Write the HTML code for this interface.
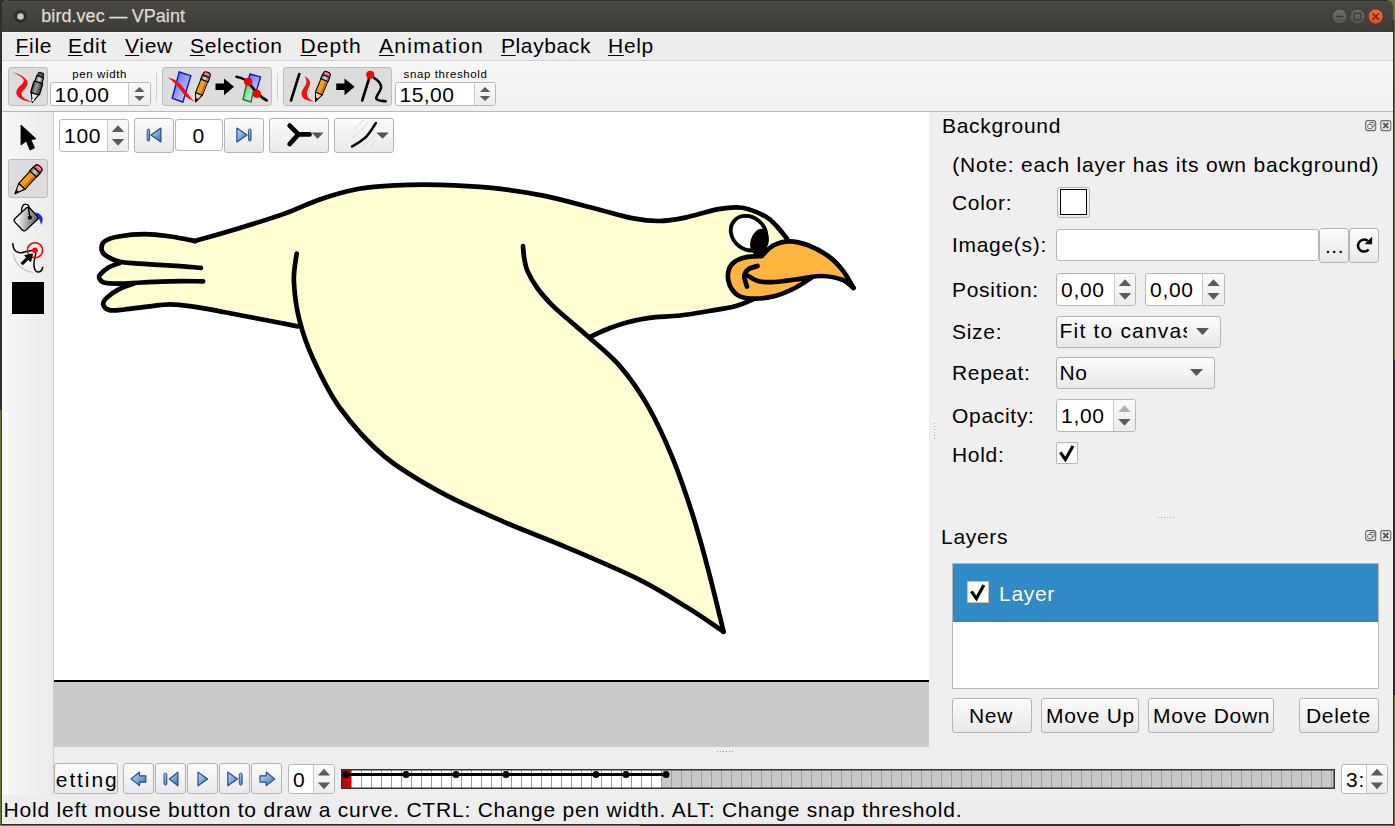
<!DOCTYPE html><html><head><meta charset="utf-8"><style>
*{margin:0;padding:0;box-sizing:border-box}
html,body{width:1395px;height:826px;overflow:hidden;background:#63763a}
u{text-decoration-thickness:1px;text-underline-offset:2px}
.t{position:absolute;font-family:"Liberation Sans",sans-serif;white-space:nowrap}
.b{position:absolute}
.btn{position:absolute;border:1px solid #b4b4b4;border-radius:3px;background:linear-gradient(#fbfbfb,#e9e9e9)}
.tbtn{position:absolute;border:1px solid #bdbdbd;border-radius:3px;background:#dcdcdc}
.spin{position:absolute;border:1px solid #b8b8b8;border-radius:3px;background:#fff}
.spinr{position:absolute;top:0;border-left:1px solid #c8c8c8;background:linear-gradient(#fafafa,#ececec);border-radius:0 2px 2px 0}
.field{position:absolute;border:1px solid #b8b8b8;border-radius:3px;background:#fff}
</style></head><body><div class="b" style="left:0px;top:0px;width:2px;height:410px;background:#2f2f2f"></div><div class="b" style="left:0px;top:0px;width:12px;height:12px;background:#2f2f2f"></div><div class="b" style="left:1393px;top:360px;width:2px;height:335px;background:#2a2a2a"></div><div class="b" style="left:1393px;top:20px;width:1px;height:804px;background:#2e2e2e"></div><div class="b" style="left:1px;top:410px;width:1px;height:414px;background:#3a3f30"></div><div class="b" style="left:1px;top:824px;width:1393px;height:1px;background:#2e2e2e"></div><div class="b" style="left:640px;top:824px;width:600px;height:2px;background:#2f2f2f"></div><div class="b" style="left:2px;top:0px;width:1391px;height:824px;background:#ededed;border-radius:6px 6px 0 0"></div><div class="b" style="left:2px;top:0px;width:1391px;height:32px;background:linear-gradient(#4a4944,#3c3b37);border-radius:6px 6px 0 0;border-top:1px solid #2e2d2a"></div><svg class="b" style="left:0;top:0" width="60" height="32"><circle cx="20.5" cy="16.5" r="6.5" fill="#2f2e2b"/><circle cx="20.5" cy="16.5" r="3.3" fill="#c9c6c0"/></svg><div class="t" style="left:41.3px;top:7.06px;font-size:18px;line-height:18px;letter-spacing:0.05px;color:#dfdbd2;-webkit-text-stroke:0.25px #dfdbd2;word-spacing:-0.6px">bird.vec — VPaint</div><svg class="b" style="left:1325px;top:4px" width="66" height="26">
<defs><linearGradient id="gb" x1="0" y1="0" x2="0" y2="1"><stop offset="0" stop-color="#6e6d68"/><stop offset="1" stop-color="#54534f"/></linearGradient>
<linearGradient id="gr" x1="0" y1="0" x2="0" y2="1"><stop offset="0" stop-color="#f06a3c"/><stop offset="1" stop-color="#df4f1c"/></linearGradient></defs>
<circle cx="14.5" cy="12.5" r="7.6" fill="url(#gb)" stroke="#33322f" stroke-width="0.8"/>
<line x1="11" y1="12.5" x2="18" y2="12.5" stroke="#3a3935" stroke-width="1.3"/>
<circle cx="32.5" cy="12.5" r="7.6" fill="url(#gb)" stroke="#33322f" stroke-width="0.8"/>
<rect x="29.2" y="9.2" width="6.6" height="6.6" fill="none" stroke="#3a3935" stroke-width="1.3"/>
<circle cx="50.7" cy="12.5" r="7.6" fill="url(#gr)" stroke="#33322f" stroke-width="0.8"/>
<path d="M47.6,9.4 L53.8,15.6 M53.8,9.4 L47.6,15.6" stroke="#3a2a20" stroke-width="1.3"/>
</svg><div class="b" style="left:2px;top:32px;width:1391px;height:28px;background:#ededed"></div><div class="b" style="left:2px;top:32px;width:1391px;height:1px;background:#f8f8f8"></div><div class="b" style="left:2px;top:60px;width:1391px;height:1px;background:#d4d4d4"></div><div class="t" style="left:15.5px;top:35.22px;font-size:21px;line-height:21px;letter-spacing:0.7px;color:#000;"><u>F</u>ile</div><div class="t" style="left:68px;top:35.22px;font-size:21px;line-height:21px;letter-spacing:0.7px;color:#000;"><u>E</u>dit</div><div class="t" style="left:125px;top:35.22px;font-size:21px;line-height:21px;letter-spacing:0.7px;color:#000;"><u>V</u>iew</div><div class="t" style="left:190px;top:35.22px;font-size:21px;line-height:21px;letter-spacing:0.7px;color:#000;"><u>S</u>election</div><div class="t" style="left:300.5px;top:35.22px;font-size:21px;line-height:21px;letter-spacing:1.05px;color:#000;"><u>D</u>epth</div><div class="t" style="left:379px;top:35.22px;font-size:21px;line-height:21px;letter-spacing:1.3px;color:#000;"><u>A</u>nimation</div><div class="t" style="left:501px;top:35.22px;font-size:21px;line-height:21px;letter-spacing:0.6px;color:#000;"><u>P</u>layback</div><div class="t" style="left:608px;top:35.22px;font-size:21px;line-height:21px;letter-spacing:0.7px;color:#000;"><u>H</u>elp</div><div class="b" style="left:2px;top:61px;width:1391px;height:50px;background:linear-gradient(#f7f7f7,#f1f1f1)"></div><div class="b" style="left:2px;top:111px;width:1391px;height:1px;background:#b9b9b9"></div><div class="tbtn" style="left:8px;top:67px;width:40px;height:39px"></div><div class="tbtn" style="left:162px;top:67px;width:110px;height:39px"></div><div class="tbtn" style="left:283px;top:67px;width:109px;height:39px"></div><div class="b" style="left:156px;top:73px;width:1px;height:28px;background:#d0d0d0"></div><div class="b" style="left:277px;top:73px;width:1px;height:28px;background:#d0d0d0"></div><div class="t" style="left:72.3px;top:69.07px;font-size:11.5px;line-height:11.5px;letter-spacing:0.6px;color:#000;">pen width</div><div class="spin" style="left:50px;top:82px;width:101px;height:24px"><div class="spinr" style="left:77px;width:22px;height:22px"></div><svg style="position:absolute;left:77px;top:-1px" width="23" height="24"><path d="M6.3,10.1 L11.5,5.0 L16.7,10.1 Z" fill="#5c5c5c"/><path d="M6.3,13.9 L11.5,19.0 L16.7,13.9 Z" fill="#5c5c5c"/></svg></div><div class="t" style="left:54.5px;top:84.22px;font-size:21px;line-height:21px;letter-spacing:0.45px;color:#000;">10,00</div><div class="t" style="left:403.6px;top:69.07px;font-size:11.5px;line-height:11.5px;letter-spacing:0.6px;color:#000;">snap threshold</div><div class="spin" style="left:395px;top:82px;width:101px;height:24px"><div class="spinr" style="left:78px;width:21px;height:22px"></div><svg style="position:absolute;left:78px;top:-1px" width="22" height="24"><path d="M5.8,10.1 L11.0,5.0 L16.2,10.1 Z" fill="#5c5c5c"/><path d="M5.8,13.9 L11.0,19.0 L16.2,13.9 Z" fill="#5c5c5c"/></svg></div><div class="t" style="left:399.5px;top:84.22px;font-size:21px;line-height:21px;letter-spacing:0.45px;color:#000;">15,00</div><div class="b" style="left:2px;top:112px;width:51px;height:683px;background:linear-gradient(90deg,#f8f8f8,#ebebeb)"></div><div class="b" style="left:53px;top:112px;width:1px;height:683px;background:#cdcdcd"></div><div class="tbtn" style="left:8px;top:159px;width:40px;height:39px"></div><div class="b" style="left:12px;top:282px;width:32px;height:32px;background:#000"></div><div class="b" style="left:54px;top:112px;width:875px;height:568px;background:#fff"></div><div class="b" style="left:54px;top:680px;width:875px;height:2px;background:#000"></div><div class="b" style="left:54px;top:682px;width:875px;height:65px;background:#cbcbcb"></div><div class="spin" style="left:59px;top:119px;width:70px;height:33px"><div class="spinr" style="left:47px;width:21px;height:31px"></div><svg style="position:absolute;left:47px;top:-1px" width="22" height="33"><path d="M4.8,12.9 L11.0,6.300000000000001 L17.2,12.9 Z" fill="#5c5c5c"/><path d="M4.8,20.1 L11.0,26.7 L17.2,20.1 Z" fill="#5c5c5c"/></svg></div><div class="t" style="left:64px;top:125.22px;font-size:21px;line-height:21px;letter-spacing:0.7px;color:#000;">100</div><div class="btn" style="left:134px;top:118px;width:40px;height:35px"></div><div class="field" style="left:175px;top:119px;width:48px;height:32px"></div><div class="t" style="left:192.5px;top:125.22px;font-size:21px;line-height:21px;letter-spacing:0.7px;color:#000;">0</div><div class="btn" style="left:224px;top:118px;width:40px;height:35px"></div><div class="btn" style="left:269px;top:118px;width:60px;height:35px"></div><div class="btn" style="left:334px;top:118px;width:60px;height:35px"></div><svg class="bird" width="1395" height="826" viewBox="0 0 1395 826" style="position:absolute;left:0;top:0" fill="none" stroke="#000" stroke-width="4.7" stroke-linecap="round" stroke-linejoin="round"><path d="M195.0,241.0 C206.0,239.8 221.9,233.5 236.6,229.0 C251.3,224.5 269.2,219.1 283.2,214.1 C297.2,209.1 308.1,203.4 320.5,199.2 C332.9,195.0 345.4,191.3 357.8,189.0 C370.2,186.7 381.3,186.0 395.0,185.3 C408.7,184.6 423.9,184.4 440.0,184.8 C456.1,185.2 474.4,186.1 491.6,187.9 C508.8,189.7 526.0,192.2 543.2,195.6 C560.4,199.0 579.8,204.7 594.8,208.5 C609.8,212.3 622.7,216.3 633.5,218.4 C644.3,220.5 650.8,221.1 659.4,221.0 C668.0,220.9 675.3,219.6 685.2,217.6 C695.1,215.6 709.2,210.7 718.7,209.1 C728.2,207.5 734.1,206.6 741.9,207.8 C749.6,209.0 759.4,213.2 765.2,216.3 C771.1,219.4 773.4,222.8 777.0,226.5 C780.6,230.2 784.7,235.5 786.9,238.6 C789.1,241.7 785.3,241.1 790.0,245.0 C794.7,248.9 813.3,255.8 815.0,262.0 C816.7,268.2 807.5,276.5 800.0,282.0 C792.5,287.5 780.7,291.0 770.0,295.0 C759.3,299.0 746.6,303.2 736.0,306.0 C725.4,308.8 715.8,309.9 706.5,311.5 C697.2,313.1 689.5,314.4 680.0,315.5 C670.5,316.6 657.9,316.7 649.4,317.8 C640.9,318.9 635.3,320.3 628.7,322.0 C622.1,323.7 616.5,325.5 610.0,328.0 C603.5,330.5 587.9,330.7 589.5,337.0 C591.1,343.3 609.9,354.3 619.5,365.6 C629.1,376.9 638.4,389.6 647.1,404.7 C655.8,419.8 664.3,438.0 671.7,455.9 C679.1,473.8 685.7,493.2 691.7,511.8 C697.7,530.5 702.4,547.8 707.7,567.8 C713.0,587.8 726.9,625.0 723.6,631.7 C720.3,638.4 701.7,616.4 687.7,607.8 C673.7,599.1 659.7,589.8 639.7,579.8 C619.7,569.8 590.4,557.5 567.8,547.8 C545.1,538.1 525.1,531.1 503.8,521.8 C482.5,512.5 459.9,502.9 439.9,491.9 C419.9,480.9 400.5,469.9 383.9,455.9 C367.2,441.9 351.8,424.1 340.0,408.0 C328.2,391.9 320.4,373.0 313.4,359.4 C306.4,345.8 306.7,333.1 297.8,326.4 C288.9,319.7 272.4,321.4 260.0,319.0 C247.7,316.6 234.8,314.1 223.7,312.0 C212.6,309.9 202.3,307.9 193.4,306.6 C184.5,305.3 178.2,304.3 170.5,304.3 C162.8,304.3 155.2,305.7 147.5,306.6 C139.8,307.5 130.8,308.9 124.5,309.5 C118.2,310.1 113.0,311.0 109.5,310.1 C106.0,309.2 103.6,306.4 103.2,304.3 C102.8,302.2 104.6,299.9 107.2,297.4 C109.8,294.9 114.3,291.7 118.7,289.4 C123.1,287.1 133.7,284.6 133.7,283.6 C133.7,282.6 123.7,283.8 118.7,283.6 C113.7,283.4 107.0,283.4 103.8,282.5 C100.5,281.6 99.8,279.2 99.2,277.9 C98.6,276.5 98.8,276.1 100.3,274.4 C101.8,272.7 105.1,269.4 108.4,267.5 C111.7,265.6 120.5,265.0 119.9,262.9 C119.3,260.8 108.0,257.4 104.9,254.9 C101.8,252.4 101.5,250.3 101.5,248.0 C101.5,245.7 102.0,243.0 104.9,241.1 C107.8,239.2 112.0,237.7 118.7,236.5 C125.4,235.3 136.6,234.2 145.2,234.2 C153.8,234.2 162.2,235.4 170.5,236.5 C178.8,237.6 184.0,242.2 195.0,241.0 Z" fill="#fffdd2" stroke="none"/><path d="M195.0,241.0 C201.9,239.0 221.9,233.5 236.6,229.0 C251.3,224.5 269.2,219.1 283.2,214.1 C297.2,209.1 308.1,203.4 320.5,199.2 C332.9,195.0 345.4,191.3 357.8,189.0 C370.2,186.7 381.3,186.0 395.0,185.3 C408.7,184.6 423.9,184.4 440.0,184.8 C456.1,185.2 474.4,186.1 491.6,187.9 C508.8,189.7 526.0,192.2 543.2,195.6 C560.4,199.0 579.8,204.7 594.8,208.5 C609.8,212.3 622.7,216.3 633.5,218.4 C644.3,220.5 650.8,221.1 659.4,221.0 C668.0,220.9 675.3,219.6 685.2,217.6 C695.1,215.6 709.2,210.7 718.7,209.1 C728.2,207.5 734.1,206.6 741.9,207.8 C749.6,209.0 759.4,213.2 765.2,216.3 C771.1,219.4 773.4,222.8 777.0,226.5 C780.6,230.2 785.2,236.6 786.9,238.6"/><path d="M195.0,241.0 C190.9,240.2 178.8,237.6 170.5,236.5 C162.2,235.4 153.8,234.2 145.2,234.2 C136.6,234.2 125.4,235.3 118.7,236.5 C112.0,237.7 107.8,239.2 104.9,241.1 C102.0,243.0 101.5,245.7 101.5,248.0 C101.5,250.3 101.8,252.6 104.9,254.9 C108.0,257.2 112.8,260.3 119.9,261.8 C127.0,263.3 138.1,263.4 147.5,264.1 C156.9,264.8 167.3,265.2 176.2,265.8 C185.1,266.4 196.8,267.5 200.9,267.8"/><path d="M119.9,262.9 C118.0,263.7 111.7,265.6 108.4,267.5 C105.1,269.4 101.8,272.7 100.3,274.4 C98.8,276.1 98.6,276.5 99.2,277.9 C99.8,279.2 100.5,281.6 103.8,282.5 C107.0,283.4 112.4,283.6 118.7,283.6 C125.0,283.6 133.1,282.9 141.7,282.5 C150.3,282.1 160.2,281.5 170.5,281.3 C180.8,281.1 197.8,281.3 203.2,281.3"/><path d="M133.7,283.6 C131.2,284.6 123.1,287.1 118.7,289.4 C114.3,291.7 109.8,294.9 107.2,297.4 C104.6,299.9 102.8,302.2 103.2,304.3 C103.6,306.4 106.0,309.2 109.5,310.1 C113.0,311.0 118.2,310.1 124.5,309.5 C130.8,308.9 139.8,307.5 147.5,306.6 C155.2,305.7 162.8,304.3 170.5,304.3 C178.2,304.3 184.5,305.3 193.4,306.6 C202.3,307.9 212.6,309.9 223.7,312.0 C234.8,314.1 247.7,316.6 260.0,319.0 C272.4,321.4 291.5,325.2 297.8,326.4"/><path d="M296.7,253.5 C296.2,258.1 293.4,270.2 293.9,281.4 C294.4,292.5 296.2,307.4 299.5,320.4 C302.8,333.4 306.6,344.8 313.4,359.4 C320.1,374.0 328.2,391.9 340.0,408.0 C351.8,424.1 367.2,441.9 383.9,455.9 C400.5,469.9 419.9,480.9 439.9,491.9 C459.9,502.9 482.5,512.5 503.8,521.8 C525.1,531.1 545.1,538.1 567.8,547.8 C590.4,557.5 619.7,569.8 639.7,579.8 C659.7,589.8 673.7,599.1 687.7,607.8 C701.7,616.4 717.6,627.7 723.6,631.7"/><path d="M523.0,246.1 C523.2,248.1 523.4,253.8 524.2,258.0 C525.0,262.2 525.3,266.2 527.6,271.4 C529.9,276.6 533.8,283.2 538.0,289.0 C542.2,294.8 547.6,300.6 552.9,305.9 C558.2,311.2 564.1,315.8 570.0,321.0 C575.9,326.2 580.2,329.5 588.5,336.9 C596.8,344.3 609.7,354.3 619.5,365.6 C629.3,376.9 638.4,389.6 647.1,404.7 C655.8,419.8 664.3,438.0 671.7,455.9 C679.1,473.8 685.7,493.2 691.7,511.8 C697.7,530.5 702.4,547.8 707.7,567.8 C713.0,587.8 721.0,621.1 723.6,631.7"/><path d="M589.5,337.0 C592.9,335.5 603.5,330.5 610.0,328.0 C616.5,325.5 622.1,323.7 628.7,322.0 C635.3,320.3 640.9,318.9 649.4,317.8 C657.9,316.7 670.5,316.6 680.0,315.5 C689.5,314.4 697.2,313.1 706.5,311.5 C715.8,309.9 727.9,308.1 736.0,306.0 C744.1,303.9 751.8,299.8 755.0,298.6"/><ellipse cx="748.6" cy="233.2" rx="19" ry="16" transform="rotate(40 748.6 233.2)" fill="#fff" stroke="#000" stroke-width="3.8"/><ellipse cx="759.5" cy="242" rx="9" ry="13.5" transform="rotate(15 759.5 242)" fill="#000" stroke="none"/><path d="M761.6,256.0 C766.3,254.0 768.9,247.8 773.6,245.3 C778.3,242.9 783.8,241.3 789.6,241.3 C795.4,241.3 801.8,242.9 808.2,245.3 C814.6,247.8 822.4,251.8 828.2,256.0 C834.0,260.2 838.7,265.3 842.9,270.6 C847.1,275.9 853.5,286.3 853.5,287.9 C853.5,289.5 848.2,282.0 842.9,280.0 C837.6,278.0 828.5,276.2 821.6,276.0 C814.7,275.8 803.4,278.3 801.6,278.6 C799.8,278.9 812.1,276.4 811.0,278.0 C809.9,279.6 801.0,285.0 795.0,288.0 C789.0,291.0 781.7,294.2 775.0,296.0 C768.3,297.8 761.0,298.6 755.0,298.6 C749.0,298.6 743.2,298.2 739.0,296.0 C734.8,293.8 731.5,289.3 729.7,285.3 C727.9,281.3 727.6,275.8 728.3,272.0 C728.9,268.2 730.7,265.1 733.6,262.6 C736.5,260.2 740.9,258.4 745.6,257.3 C750.3,256.2 756.9,258.0 761.6,256.0 Z" fill="#ffb540" stroke="none"/><path d="M761.6,256.0 C763.6,254.2 768.9,247.8 773.6,245.3 C778.3,242.9 783.8,241.3 789.6,241.3 C795.4,241.3 801.8,242.9 808.2,245.3 C814.6,247.8 822.4,251.8 828.2,256.0 C834.0,260.2 838.7,265.3 842.9,270.6 C847.1,275.9 851.7,285.0 853.5,287.9"/><path d="M853.5,287.9 C851.7,286.6 848.2,282.0 842.9,280.0 C837.6,278.0 828.5,276.2 821.6,276.0 C814.7,275.8 809.4,277.6 801.6,278.6 C793.8,279.6 782.1,281.6 775.0,282.0 C767.9,282.4 763.5,282.3 759.0,281.3 C754.5,280.3 750.1,276.9 748.3,276.0"/><path d="M811.0,278.0 C808.3,279.7 801.0,285.0 795.0,288.0 C789.0,291.0 781.7,294.2 775.0,296.0 C768.3,297.8 761.0,298.6 755.0,298.6 C749.0,298.6 743.2,298.2 739.0,296.0 C734.8,293.8 731.5,289.3 729.7,285.3 C727.9,281.3 727.6,275.8 728.3,272.0 C728.9,268.2 730.7,265.1 733.6,262.6 C736.5,260.2 740.9,258.4 745.6,257.3 C750.3,256.2 758.9,256.2 761.6,256.0"/><path d="M747.0,286.6 C746.5,284.8 744.1,278.9 744.3,276.0 C744.5,273.1 746.1,271.0 748.3,269.3 C750.5,267.6 756.0,266.6 757.6,266.0"/></svg><div class="b" style="left:929px;top:112px;width:464px;height:635px;background:#efefef"></div><div class="t" style="left:942px;top:115.22px;font-size:21px;line-height:21px;letter-spacing:0.7px;color:#000;">Background</div><svg class="b" style="left:1362px;top:118px" width="31" height="15"><rect x="3.7" y="2.6" width="10" height="10" rx="2" fill="none" stroke="#6a6764" stroke-width="1.1"/><rect x="18.8" y="2.6" width="10" height="10" rx="2" fill="none" stroke="#6a6764" stroke-width="1.1"/><path d="M21.2,5 L26.4,10.2 M26.4,5 L21.2,10.2" stroke="#5a5754" stroke-width="1.8"/><rect x="7.9" y="4.5" width="4.3" height="4.3" rx="1" fill="none" stroke="#6a6764" stroke-width="1"/><rect x="5.8" y="6.4" width="4.3" height="4.3" rx="1" fill="#efefef" stroke="#6a6764" stroke-width="1"/></svg><div class="t" style="left:952.3px;top:153.92px;font-size:21px;line-height:21px;letter-spacing:0.82px;color:#000;">(Note: each layer has its own background)</div><div class="t" style="left:952px;top:191.82px;font-size:21px;line-height:21px;letter-spacing:0.7px;color:#000;">Color:</div><div class="btn" style="left:1056.5px;top:186.5px;width:33.0px;height:31.5px"></div><div class="b" style="left:1060px;top:189px;width:26.5px;height:26.19999999999999px;background:#fff;border:1.6px solid #000"></div><div class="t" style="left:952px;top:234.22px;font-size:21px;line-height:21px;letter-spacing:0.7px;color:#000;">Image(s):</div><div class="field" style="left:1056px;top:229px;width:263px;height:32px"></div><div class="btn" style="left:1319px;top:228px;width:30px;height:35px"></div><div class="t" style="left:1325px;top:235.22px;font-size:21px;line-height:21px;letter-spacing:0.5px;color:#000;">...</div><div class="btn" style="left:1349px;top:228px;width:30px;height:35px"></div><div class="t" style="left:952px;top:279.22px;font-size:21px;line-height:21px;letter-spacing:0.7px;color:#000;">Position:</div><div class="spin" style="left:1056px;top:273px;width:80px;height:33px"><div class="spinr" style="left:57px;width:21px;height:31px"></div><svg style="position:absolute;left:57px;top:-1px" width="22" height="33"><path d="M4.8,12.9 L11.0,6.300000000000001 L17.2,12.9 Z" fill="#5c5c5c"/><path d="M4.8,20.1 L11.0,26.7 L17.2,20.1 Z" fill="#5c5c5c"/></svg></div><div class="t" style="left:1061px;top:279.22px;font-size:21px;line-height:21px;letter-spacing:0.7px;color:#000;">0,00</div><div class="spin" style="left:1145px;top:273px;width:80px;height:33px"><div class="spinr" style="left:56px;width:22px;height:31px"></div><svg style="position:absolute;left:56px;top:-1px" width="23" height="33"><path d="M5.3,12.9 L11.5,6.300000000000001 L17.7,12.9 Z" fill="#5c5c5c"/><path d="M5.3,20.1 L11.5,26.7 L17.7,20.1 Z" fill="#5c5c5c"/></svg></div><div class="t" style="left:1150px;top:279.22px;font-size:21px;line-height:21px;letter-spacing:0.7px;color:#000;">0,00</div><div class="t" style="left:952px;top:321.22px;font-size:21px;line-height:21px;letter-spacing:0.7px;color:#000;">Size:</div><div class="btn" style="left:1056px;top:316px;width:165px;height:32px"></div><div class="t" style="left:1059.5px;top:320px;width:127.5px;overflow:hidden;font-size:21px;line-height:21px;letter-spacing:1.2px;height:28px">Fit to canvas</div><svg class="b" style="left:1195px;top:327px" width="16" height="10"><path d="M1,1 L14,1 L7.5,8 Z" fill="#555"/></svg><div class="t" style="left:952px;top:362.22px;font-size:21px;line-height:21px;letter-spacing:0.7px;color:#000;">Repeat:</div><div class="btn" style="left:1056px;top:357px;width:159px;height:32px"></div><div class="t" style="left:1059.5px;top:362.22px;font-size:21px;line-height:21px;letter-spacing:0.7px;color:#000;">No</div><svg class="b" style="left:1189px;top:368px" width="16" height="10"><path d="M1,1 L14,1 L7.5,8 Z" fill="#555"/></svg><div class="t" style="left:952px;top:405.22px;font-size:21px;line-height:21px;letter-spacing:0.7px;color:#000;">Opacity:</div><div class="spin" style="left:1056px;top:399px;width:80px;height:33px"><div class="spinr" style="left:56px;width:22px;height:31px"></div><svg style="position:absolute;left:56px;top:-1px" width="23" height="33"><path d="M5.3,12.9 L11.5,6.300000000000001 L17.7,12.9 Z" fill="#b0b0b0"/><path d="M5.3,20.1 L11.5,26.7 L17.7,20.1 Z" fill="#5c5c5c"/></svg></div><div class="t" style="left:1061px;top:405.22px;font-size:21px;line-height:21px;letter-spacing:0.7px;color:#000;">1,00</div><div class="t" style="left:952px;top:443.82px;font-size:21px;line-height:21px;letter-spacing:0.7px;color:#000;">Hold:</div><div class="field" style="left:1056px;top:442px;width:22px;height:22px;border-radius:1px;background:linear-gradient(#efefef 0,#fff 3px)"></div><svg class="b" style="left:1056px;top:442px" width="22" height="22"><path d="M4.4,10.3 L9.4,17.6 L16.9,4" fill="none" stroke="#000" stroke-width="3.1" stroke-linejoin="miter"/></svg><div class="b" style="left:1158px;top:517px;width:18px;height:1px;background:repeating-linear-gradient(90deg,#aaa 0 1px,transparent 1px 3px)"></div><div class="b" style="left:934px;top:423px;width:1px;height:17px;background:repeating-linear-gradient(#aaa 0 1px,transparent 1px 3px)"></div><div class="t" style="left:941px;top:525.62px;font-size:21px;line-height:21px;letter-spacing:0.7px;color:#000;">Layers</div><svg class="b" style="left:1362px;top:528px" width="31" height="15"><rect x="3.7" y="2.6" width="10" height="10" rx="2" fill="none" stroke="#6a6764" stroke-width="1.1"/><rect x="18.8" y="2.6" width="10" height="10" rx="2" fill="none" stroke="#6a6764" stroke-width="1.1"/><path d="M21.2,5 L26.4,10.2 M26.4,5 L21.2,10.2" stroke="#5a5754" stroke-width="1.8"/><rect x="7.9" y="4.5" width="4.3" height="4.3" rx="1" fill="none" stroke="#6a6764" stroke-width="1"/><rect x="5.8" y="6.4" width="4.3" height="4.3" rx="1" fill="#efefef" stroke="#6a6764" stroke-width="1"/></svg><div class="b" style="left:952px;top:563px;width:427px;height:126px;background:#fff;border:1px solid #b8b8b8"></div><div class="b" style="left:953px;top:564px;width:425px;height:58px;background:#2f8ac6"></div><div class="b" style="left:967px;top:581px;width:22px;height:22px;background:#fff;border:1px solid #c9c0b0"></div><svg class="b" style="left:967px;top:581px" width="22" height="22"><path d="M4.4,10.3 L9.4,17.6 L16.9,4" fill="none" stroke="#000" stroke-width="3.1" stroke-linejoin="miter"/></svg><div class="t" style="left:999px;top:582.82px;font-size:21px;line-height:21px;letter-spacing:0.7px;color:#fff;">Layer</div><div class="btn" style="left:952px;top:698px;width:80px;height:35px"></div><div class="t" style="left:969px;top:705.22px;font-size:21px;line-height:21px;letter-spacing:0.7px;color:#000;">New</div><div class="btn" style="left:1041px;top:698px;width:98px;height:35px"></div><div class="t" style="left:1046px;top:705.22px;font-size:21px;line-height:21px;letter-spacing:0.7px;color:#000;">Move Up</div><div class="btn" style="left:1148px;top:698px;width:126px;height:35px"></div><div class="t" style="left:1153px;top:705.22px;font-size:21px;line-height:21px;letter-spacing:0.7px;color:#000;">Move Down</div><div class="btn" style="left:1299px;top:698px;width:80px;height:35px"></div><div class="t" style="left:1306px;top:705.22px;font-size:21px;line-height:21px;letter-spacing:0.7px;color:#000;">Delete</div><div class="b" style="left:54px;top:747px;width:1339px;height:48px;background:#eeeeee"></div><div class="b" style="left:717px;top:751px;width:17px;height:1px;background:repeating-linear-gradient(90deg,#999 0 1px,transparent 1px 3px)"></div><div class="btn" style="left:54px;top:763px;width:64px;height:31px"></div><div class="t" style="left:55.8px;top:769.22px;font-size:21px;line-height:21px;letter-spacing:1.9px;color:#000;">etting</div><div class="btn" style="left:123px;top:763px;width:31px;height:31px"></div><div class="btn" style="left:155px;top:763px;width:31px;height:31px"></div><div class="btn" style="left:187px;top:763px;width:31px;height:31px"></div><div class="btn" style="left:219px;top:763px;width:31px;height:31px"></div><div class="btn" style="left:251px;top:763px;width:31px;height:31px"></div><div class="spin" style="left:288px;top:764px;width:47px;height:30px"><div class="spinr" style="left:24px;width:21px;height:28px"></div><svg style="position:absolute;left:24px;top:-1px" width="22" height="30"><path d="M4.8,11.4 L11.0,4.800000000000001 L17.2,11.4 Z" fill="#5c5c5c"/><path d="M4.8,18.6 L11.0,25.2 L17.2,18.6 Z" fill="#5c5c5c"/></svg></div><div class="t" style="left:293px;top:769.22px;font-size:21px;line-height:21px;letter-spacing:0.7px;color:#000;">0</div><svg class="b" style="left:341px;top:769px" width="994" height="20"><rect x="0" y="0" width="994" height="20" fill="#c8c8c8"/><rect x="1" y="1" width="320" height="18" fill="#fff"/><rect x="1" y="1" width="10" height="18" fill="#cc0000"/><line x1="10.5" y1="1" x2="10.5" y2="19" stroke="#9b9bd0" stroke-width="1"/><line x1="20.5" y1="1" x2="20.5" y2="19" stroke="#9b9bd0" stroke-width="1"/><line x1="30.5" y1="1" x2="30.5" y2="19" stroke="#9b9bd0" stroke-width="1"/><line x1="40.5" y1="1" x2="40.5" y2="19" stroke="#9b9bd0" stroke-width="1"/><line x1="50.5" y1="1" x2="50.5" y2="19" stroke="#9b9bd0" stroke-width="1"/><line x1="60.5" y1="1" x2="60.5" y2="19" stroke="#9b9bd0" stroke-width="1"/><line x1="70.5" y1="1" x2="70.5" y2="19" stroke="#9b9bd0" stroke-width="1"/><line x1="80.5" y1="1" x2="80.5" y2="19" stroke="#9b9bd0" stroke-width="1"/><line x1="90.5" y1="1" x2="90.5" y2="19" stroke="#9b9bd0" stroke-width="1"/><line x1="100.5" y1="1" x2="100.5" y2="19" stroke="#9b9bd0" stroke-width="1"/><line x1="110.5" y1="1" x2="110.5" y2="19" stroke="#9b9bd0" stroke-width="1"/><line x1="120.5" y1="1" x2="120.5" y2="19" stroke="#9b9bd0" stroke-width="1"/><line x1="130.5" y1="1" x2="130.5" y2="19" stroke="#9b9bd0" stroke-width="1"/><line x1="140.5" y1="1" x2="140.5" y2="19" stroke="#9b9bd0" stroke-width="1"/><line x1="150.5" y1="1" x2="150.5" y2="19" stroke="#9b9bd0" stroke-width="1"/><line x1="160.5" y1="1" x2="160.5" y2="19" stroke="#9b9bd0" stroke-width="1"/><line x1="170.5" y1="1" x2="170.5" y2="19" stroke="#9b9bd0" stroke-width="1"/><line x1="180.5" y1="1" x2="180.5" y2="19" stroke="#9b9bd0" stroke-width="1"/><line x1="190.5" y1="1" x2="190.5" y2="19" stroke="#9b9bd0" stroke-width="1"/><line x1="200.5" y1="1" x2="200.5" y2="19" stroke="#9b9bd0" stroke-width="1"/><line x1="210.5" y1="1" x2="210.5" y2="19" stroke="#9b9bd0" stroke-width="1"/><line x1="220.5" y1="1" x2="220.5" y2="19" stroke="#9b9bd0" stroke-width="1"/><line x1="230.5" y1="1" x2="230.5" y2="19" stroke="#9b9bd0" stroke-width="1"/><line x1="240.5" y1="1" x2="240.5" y2="19" stroke="#9b9bd0" stroke-width="1"/><line x1="250.5" y1="1" x2="250.5" y2="19" stroke="#9b9bd0" stroke-width="1"/><line x1="260.5" y1="1" x2="260.5" y2="19" stroke="#9b9bd0" stroke-width="1"/><line x1="270.5" y1="1" x2="270.5" y2="19" stroke="#9b9bd0" stroke-width="1"/><line x1="280.5" y1="1" x2="280.5" y2="19" stroke="#9b9bd0" stroke-width="1"/><line x1="290.5" y1="1" x2="290.5" y2="19" stroke="#9b9bd0" stroke-width="1"/><line x1="300.5" y1="1" x2="300.5" y2="19" stroke="#9b9bd0" stroke-width="1"/><line x1="310.5" y1="1" x2="310.5" y2="19" stroke="#9b9bd0" stroke-width="1"/><line x1="320.5" y1="1" x2="320.5" y2="19" stroke="#9b9bd0" stroke-width="1"/><line x1="330.5" y1="1" x2="330.5" y2="19" stroke="#9b9bd0" stroke-width="1"/><line x1="340.5" y1="1" x2="340.5" y2="19" stroke="#9b9bd0" stroke-width="1"/><line x1="350.5" y1="1" x2="350.5" y2="19" stroke="#9b9bd0" stroke-width="1"/><line x1="360.5" y1="1" x2="360.5" y2="19" stroke="#9b9bd0" stroke-width="1"/><line x1="370.5" y1="1" x2="370.5" y2="19" stroke="#9b9bd0" stroke-width="1"/><line x1="380.5" y1="1" x2="380.5" y2="19" stroke="#9b9bd0" stroke-width="1"/><line x1="390.5" y1="1" x2="390.5" y2="19" stroke="#9b9bd0" stroke-width="1"/><line x1="400.5" y1="1" x2="400.5" y2="19" stroke="#9b9bd0" stroke-width="1"/><line x1="410.5" y1="1" x2="410.5" y2="19" stroke="#9b9bd0" stroke-width="1"/><line x1="420.5" y1="1" x2="420.5" y2="19" stroke="#9b9bd0" stroke-width="1"/><line x1="430.5" y1="1" x2="430.5" y2="19" stroke="#9b9bd0" stroke-width="1"/><line x1="440.5" y1="1" x2="440.5" y2="19" stroke="#9b9bd0" stroke-width="1"/><line x1="450.5" y1="1" x2="450.5" y2="19" stroke="#9b9bd0" stroke-width="1"/><line x1="460.5" y1="1" x2="460.5" y2="19" stroke="#9b9bd0" stroke-width="1"/><line x1="470.5" y1="1" x2="470.5" y2="19" stroke="#9b9bd0" stroke-width="1"/><line x1="480.5" y1="1" x2="480.5" y2="19" stroke="#9b9bd0" stroke-width="1"/><line x1="490.5" y1="1" x2="490.5" y2="19" stroke="#9b9bd0" stroke-width="1"/><line x1="500.5" y1="1" x2="500.5" y2="19" stroke="#9b9bd0" stroke-width="1"/><line x1="510.5" y1="1" x2="510.5" y2="19" stroke="#9b9bd0" stroke-width="1"/><line x1="520.5" y1="1" x2="520.5" y2="19" stroke="#9b9bd0" stroke-width="1"/><line x1="530.5" y1="1" x2="530.5" y2="19" stroke="#9b9bd0" stroke-width="1"/><line x1="540.5" y1="1" x2="540.5" y2="19" stroke="#9b9bd0" stroke-width="1"/><line x1="550.5" y1="1" x2="550.5" y2="19" stroke="#9b9bd0" stroke-width="1"/><line x1="560.5" y1="1" x2="560.5" y2="19" stroke="#9b9bd0" stroke-width="1"/><line x1="570.5" y1="1" x2="570.5" y2="19" stroke="#9b9bd0" stroke-width="1"/><line x1="580.5" y1="1" x2="580.5" y2="19" stroke="#9b9bd0" stroke-width="1"/><line x1="590.5" y1="1" x2="590.5" y2="19" stroke="#9b9bd0" stroke-width="1"/><line x1="600.5" y1="1" x2="600.5" y2="19" stroke="#9b9bd0" stroke-width="1"/><line x1="610.5" y1="1" x2="610.5" y2="19" stroke="#9b9bd0" stroke-width="1"/><line x1="620.5" y1="1" x2="620.5" y2="19" stroke="#9b9bd0" stroke-width="1"/><line x1="630.5" y1="1" x2="630.5" y2="19" stroke="#9b9bd0" stroke-width="1"/><line x1="640.5" y1="1" x2="640.5" y2="19" stroke="#9b9bd0" stroke-width="1"/><line x1="650.5" y1="1" x2="650.5" y2="19" stroke="#9b9bd0" stroke-width="1"/><line x1="660.5" y1="1" x2="660.5" y2="19" stroke="#9b9bd0" stroke-width="1"/><line x1="670.5" y1="1" x2="670.5" y2="19" stroke="#9b9bd0" stroke-width="1"/><line x1="680.5" y1="1" x2="680.5" y2="19" stroke="#9b9bd0" stroke-width="1"/><line x1="690.5" y1="1" x2="690.5" y2="19" stroke="#9b9bd0" stroke-width="1"/><line x1="700.5" y1="1" x2="700.5" y2="19" stroke="#9b9bd0" stroke-width="1"/><line x1="710.5" y1="1" x2="710.5" y2="19" stroke="#9b9bd0" stroke-width="1"/><line x1="720.5" y1="1" x2="720.5" y2="19" stroke="#9b9bd0" stroke-width="1"/><line x1="730.5" y1="1" x2="730.5" y2="19" stroke="#9b9bd0" stroke-width="1"/><line x1="740.5" y1="1" x2="740.5" y2="19" stroke="#9b9bd0" stroke-width="1"/><line x1="750.5" y1="1" x2="750.5" y2="19" stroke="#9b9bd0" stroke-width="1"/><line x1="760.5" y1="1" x2="760.5" y2="19" stroke="#9b9bd0" stroke-width="1"/><line x1="770.5" y1="1" x2="770.5" y2="19" stroke="#9b9bd0" stroke-width="1"/><line x1="780.5" y1="1" x2="780.5" y2="19" stroke="#9b9bd0" stroke-width="1"/><line x1="790.5" y1="1" x2="790.5" y2="19" stroke="#9b9bd0" stroke-width="1"/><line x1="800.5" y1="1" x2="800.5" y2="19" stroke="#9b9bd0" stroke-width="1"/><line x1="810.5" y1="1" x2="810.5" y2="19" stroke="#9b9bd0" stroke-width="1"/><line x1="820.5" y1="1" x2="820.5" y2="19" stroke="#9b9bd0" stroke-width="1"/><line x1="830.5" y1="1" x2="830.5" y2="19" stroke="#9b9bd0" stroke-width="1"/><line x1="840.5" y1="1" x2="840.5" y2="19" stroke="#9b9bd0" stroke-width="1"/><line x1="850.5" y1="1" x2="850.5" y2="19" stroke="#9b9bd0" stroke-width="1"/><line x1="860.5" y1="1" x2="860.5" y2="19" stroke="#9b9bd0" stroke-width="1"/><line x1="870.5" y1="1" x2="870.5" y2="19" stroke="#9b9bd0" stroke-width="1"/><line x1="880.5" y1="1" x2="880.5" y2="19" stroke="#9b9bd0" stroke-width="1"/><line x1="890.5" y1="1" x2="890.5" y2="19" stroke="#9b9bd0" stroke-width="1"/><line x1="900.5" y1="1" x2="900.5" y2="19" stroke="#9b9bd0" stroke-width="1"/><line x1="910.5" y1="1" x2="910.5" y2="19" stroke="#9b9bd0" stroke-width="1"/><line x1="920.5" y1="1" x2="920.5" y2="19" stroke="#9b9bd0" stroke-width="1"/><line x1="930.5" y1="1" x2="930.5" y2="19" stroke="#9b9bd0" stroke-width="1"/><line x1="940.5" y1="1" x2="940.5" y2="19" stroke="#9b9bd0" stroke-width="1"/><line x1="950.5" y1="1" x2="950.5" y2="19" stroke="#9b9bd0" stroke-width="1"/><line x1="960.5" y1="1" x2="960.5" y2="19" stroke="#9b9bd0" stroke-width="1"/><line x1="970.5" y1="1" x2="970.5" y2="19" stroke="#9b9bd0" stroke-width="1"/><line x1="980.5" y1="1" x2="980.5" y2="19" stroke="#9b9bd0" stroke-width="1"/><line x1="990.5" y1="1" x2="990.5" y2="19" stroke="#9b9bd0" stroke-width="1"/><rect x="0.75" y="0.75" width="992.5" height="18.5" fill="none" stroke="#333" stroke-width="1.5"/><line x1="5" y1="5.5" x2="325" y2="5.5" stroke="#000" stroke-width="3"/><circle cx="5" cy="5.5" r="3.5" fill="#000"/><circle cx="65" cy="5.5" r="3.5" fill="#000"/><circle cx="115" cy="5.5" r="3.5" fill="#000"/><circle cx="165" cy="5.5" r="3.5" fill="#000"/><circle cx="255" cy="5.5" r="3.5" fill="#000"/><circle cx="285" cy="5.5" r="3.5" fill="#000"/><circle cx="325" cy="5.5" r="3.5" fill="#000"/></svg><div class="spin" style="left:1341px;top:764px;width:47px;height:30px"><div class="spinr" style="left:24px;width:21px;height:28px"></div><svg style="position:absolute;left:24px;top:-1px" width="22" height="30"><path d="M4.8,11.4 L11.0,4.800000000000001 L17.2,11.4 Z" fill="#5c5c5c"/><path d="M4.8,18.6 L11.0,25.2 L17.2,18.6 Z" fill="#5c5c5c"/></svg></div><div class="t" style="left:1346px;top:769.22px;font-size:21px;line-height:21px;letter-spacing:0.7px;color:#000;">3:</div><div class="b" style="left:2px;top:795px;width:1391px;height:29px;background:#ededed"></div><div class="t" style="left:3.6px;top:798.82px;font-size:21px;line-height:21px;letter-spacing:0.79px;color:#000;">Hold left mouse button to draw a curve. CTRL: Change pen width. ALT: Change snap threshold.</div><svg style="position:absolute;left:0;top:0" width="1395" height="826" viewBox="0 0 1395 826"><defs>
<linearGradient id="pgray" x1="0" y1="0" x2="1" y2="0"><stop offset="0" stop-color="#5a5a5a"/><stop offset="0.45" stop-color="#d8d8d8"/><stop offset="1" stop-color="#6a6a6a"/></linearGradient>
<linearGradient id="pdark" x1="0" y1="0" x2="1" y2="0"><stop offset="0" stop-color="#2a2a2a"/><stop offset="0.4" stop-color="#a0a0a0"/><stop offset="1" stop-color="#303030"/></linearGradient>
<linearGradient id="bucket" x1="0" y1="0" x2="1" y2="1"><stop offset="0.1" stop-color="#ffffff"/><stop offset="1" stop-color="#555"/></linearGradient>
<linearGradient id="bluer" x1="0" y1="0" x2="1" y2="1"><stop offset="0" stop-color="#4a5cf0"/><stop offset="1" stop-color="#e6e8ff"/></linearGradient>
<linearGradient id="greenr" x1="0" y1="0" x2="1" y2="1"><stop offset="0" stop-color="#3fb86a"/><stop offset="1" stop-color="#e8fff0"/></linearGradient>
<linearGradient id="navblue" x1="0" y1="0" x2="1" y2="1"><stop offset="0" stop-color="#c9def5"/><stop offset="1" stop-color="#3d6fae"/></linearGradient>
<g id="pencil">
<path d="M0,0 L-4.6,-11 L4.6,-11 Z" fill="#f6d2a2" stroke="#000" stroke-width="1.3" stroke-linejoin="round"/>
<path d="M0,0 L-1.9,-4.5 L1.9,-4.5 Z" fill="#000"/>
<rect x="-4.6" y="-29" width="9.2" height="18" fill="#f79a1e" stroke="#000" stroke-width="1.3"/>
<rect x="1.6" y="-28.3" width="2.4" height="16.6" fill="#d07000"/>
<rect x="-5" y="-34.5" width="10" height="5.5" fill="url(#pgray)" stroke="#000" stroke-width="1.3"/>
<path d="M-4.6,-34.5 L-4.6,-37 Q-4.6,-40 0,-40 Q4.6,-40 4.6,-37 L4.6,-34.5 Z" fill="#e35a6a" stroke="#000" stroke-width="1.3"/>
<path d="M-2.5,-37.5 Q0,-39 2.5,-37.5" stroke="#f5b0b8" stroke-width="1.2" fill="none"/>
</g>
</defs><path d="M12.9,72.2 C17,73 24,76 27,80.5 C29,84 26,88 23,90.5 C20.5,93 21,97 26,99.3 C28.5,100.5 30.5,101.2 31.8,101.8 C28,101.5 23,100.8 19.5,98 C15.5,95 15.5,91 18.5,87.5 C21,85 24.5,82.5 23.5,79.5 C22,77 17,74 12.9,72.2 Z" fill="#f01010"/><g transform="translate(32.3,102.3) rotate(17)"><path d="M0,0 L-4,-9 L4,-9 Z" fill="#e8e8e8" stroke="#000" stroke-width="1.2" stroke-linejoin="round"/><rect x="-4.6" y="-21" width="9.2" height="12" rx="1" fill="url(#pdark)" stroke="#000" stroke-width="1.2"/><rect x="-3.6" y="-27" width="7.2" height="6" fill="url(#pgray)" stroke="#000" stroke-width="1.2"/><rect x="-2.9" y="-31" width="5.8" height="4.2" rx="2" fill="#555" stroke="#000" stroke-width="1"/><circle cx="0" cy="-2.2" r="1.2" fill="#fff"/></g><path d="M179.2,72 L190.8,75.7 L182.9,102 L172.2,98.3 Z" fill="url(#bluer)" stroke="#1010d0" stroke-width="1.4"/><path d="M167.7,77.5 C178,79 184,88 188,94 C191,98 193,100.5 195.5,101.5 C191,100.5 187,98 184,94.5 C179,88 174,81 167.7,77.5 Z" fill="#f01010"/><use href="#pencil" transform="translate(195.7,102) rotate(22) scale(0.8)"/><path d="M215.5,83.5 L224,83.5 L224,78.5 L234,86.8 L224,95.2 L224,90 L215.5,90 Z" fill="#000"/><path d="M250,74 L260.5,77 L255.5,94 L245,91 Z" fill="url(#bluer)" stroke="#1010d0" stroke-width="1.4"/><path d="M246.5,84 L254,88 L251,102 L243,99.5 Z" fill="url(#greenr)" stroke="#108030" stroke-width="1.4"/><path d="M236.5,76.8 C242,78 246,79.5 249,83 C252,87 255,91 258,94 C261,97 264,99 266.8,100.5" fill="none" stroke="#000" stroke-width="2.6" stroke-linecap="round"/><circle cx="248.2" cy="81.8" r="4.1" fill="#f00"/><circle cx="256.8" cy="93.8" r="4.1" fill="#f00"/><line x1="291" y1="100.5" x2="299.3" y2="74" stroke="#000" stroke-width="2.6" stroke-linecap="round"/><path d="M304.4,76.3 C310,79 311.5,83 308.5,88 C305.5,93 306,98 313.8,101.6 C307,101 301,98.5 301.5,93 C302,89 307,85 306.5,81 C306,79 305.5,77.5 304.4,76.3 Z" fill="#f01010"/><use href="#pencil" transform="translate(315.5,101.5) rotate(22.5) scale(0.8)"/><path d="M336.2,83.5 L344.5,83.5 L344.5,78.5 L354.7,86.8 L344.5,95.2 L344.5,90 L336.2,90 Z" fill="#000"/><line x1="362.2" y1="100.5" x2="370" y2="75.5" stroke="#000" stroke-width="2.6" stroke-linecap="round"/><path d="M370,75 C376,79 382,83 381,88 C380,93 374,97 377,99.5 C379.5,101 383,101 385.7,101.3" fill="none" stroke="#000" stroke-width="2.6" stroke-linecap="round"/><circle cx="370.2" cy="74.7" r="4" fill="#f00"/><path d="M21,125 L21,145 L26.3,141 L30,150 L34.5,148 L31,139.8 L36,138.8 Z" fill="#000" stroke="#000" stroke-width="0.8" stroke-linejoin="round"/><use href="#pencil" transform="translate(15,193.8) rotate(42.5) scale(0.93)"/><path d="M21.5,211.8 C21.5,207 23,204 25.6,204.1 C27.8,204.2 29.3,206 29.6,209 L29.9,217.4" fill="none" stroke="#000" stroke-width="1.4"/><path d="M35,212.4 C39.5,213 42.8,216 42.6,219.5 C42.5,221.5 41.8,223.5 41.1,224.9 C40.6,222.5 40,220 38.6,218.2 Z" fill="#2020f8"/><g transform="translate(26.1,219.1) rotate(-43)"><rect x="-10.2" y="-8" width="20.4" height="16" rx="2.6" fill="url(#bucket)" stroke="#000" stroke-width="1.3"/></g><path d="M28.3,207.2 L29.9,217.4" fill="none" stroke="#000" stroke-width="1.4"/><circle cx="29.9" cy="217.6" r="2.1" fill="#000"/><path d="M13.3,253.5 C14.5,263 22,271 33.1,272.5" fill="none" stroke="#c4c4c4" stroke-width="1.2"/><path d="M12.7,243.1 C13,248 14,251.5 19.5,252.8 C23,253.5 26,250.5 35,250.3" fill="none" stroke="#000" stroke-width="1.5"/><path d="M36,252.3 C35,257 33.5,262 34,265.8 C34.5,270 36,272.5 38.5,272 C41,271.5 42.5,269 42.8,266.8" fill="none" stroke="#000" stroke-width="1.5"/><circle cx="35" cy="250.3" r="7.6" fill="none" stroke="#f00" stroke-width="1.6"/><circle cx="35" cy="250.3" r="2.8" fill="#f00"/><path d="M21.6,264.2 L27.5,258.5" stroke="#000" stroke-width="3.2" fill="none"/><path d="M32.4,254 L25,255.6 L30.6,261.3 Z" stroke="#000" stroke-width="1.2" fill="#000" stroke-linejoin="round"/><rect x="147.2" y="129" width="2.4" height="12" rx="1.2" fill="url(#navblue)" stroke="#1f4f8f" stroke-width="1"/><path d="M160.9,128 L151,135.0 L160.9,142 Z" fill="url(#navblue)" stroke="#1f4f8f" stroke-width="1.2" stroke-linejoin="round"/><path d="M236.9,128 L247,135 L236.9,142 Z" fill="url(#navblue)" stroke="#1f4f8f" stroke-width="1.2" stroke-linejoin="round"/><rect x="248.6" y="129" width="2.4" height="12" rx="1.2" fill="url(#navblue)" stroke="#1f4f8f" stroke-width="1"/><path d="M289.7,125.6 L298.4,134.4 L289.7,144 M298.4,134.4 L309.5,134.4" fill="none" stroke="#000" stroke-width="4.8" stroke-linecap="round" stroke-linejoin="round"/><path d="M311.5,132.4 L323.6,132.4 L317.6,138.7 Z" fill="#555"/><path d="M354,129 C358,126 362,122 364,119.5 M352,138 C358,134 364,128 368,122 M362,147 C367,144 371,140 375,135 M370,147 C372,145 374,143 376,141" fill="none" stroke="#d8d8d8" stroke-width="1"/><path d="M352.1,146.5 C358,143 363,140 366.6,136.3 C370,132.5 373,128 375.8,123.2" fill="none" stroke="#000" stroke-width="2.6" stroke-linecap="round"/><path d="M376.3,132.4 L388.9,132.4 L382.6,138.7 Z" fill="#555"/><path d="M131,778.9 L139.5,772.2 L139.5,775.8 L145.8,775.8 L145.8,782.2 L139.5,782.2 L139.5,785.6 Z" fill="url(#navblue)" stroke="#1f4f8f" stroke-width="1.2" stroke-linejoin="round"/><rect x="164" y="773.2" width="2.8" height="11.8" rx="1.4" fill="url(#navblue)" stroke="#1f4f8f" stroke-width="1"/><path d="M177.9,772.2 L169.4,779.0 L177.9,785.8 Z" fill="url(#navblue)" stroke="#1f4f8f" stroke-width="1.2" stroke-linejoin="round"/><path d="M198,772.2 L207.7,779 L198,785.8 Z" fill="url(#navblue)" stroke="#1f4f8f" stroke-width="1.2" stroke-linejoin="round"/><path d="M227.8,772.2 L237.6,779 L227.8,785.8 Z" fill="url(#navblue)" stroke="#1f4f8f" stroke-width="1.2" stroke-linejoin="round"/><rect x="239.3" y="773.2" width="2.8" height="11.8" rx="1.4" fill="url(#navblue)" stroke="#1f4f8f" stroke-width="1"/><path d="M274.8,778.9 L266.3,772.2 L266.3,775.8 L260,775.8 L260,782.2 L266.3,782.2 L266.3,785.6 Z" fill="url(#navblue)" stroke="#1f4f8f" stroke-width="1.2" stroke-linejoin="round"/><path d="M1367.6,240.8 A6,6 0 1 0 1368.6,249.5" fill="none" stroke="#000" stroke-width="2.5"/><path d="M1371.8,237.3 L1371.8,244 L1365.2,243.8 Z" fill="#000" stroke="#000" stroke-width="0.6" stroke-linejoin="round"/></svg></body></html>
